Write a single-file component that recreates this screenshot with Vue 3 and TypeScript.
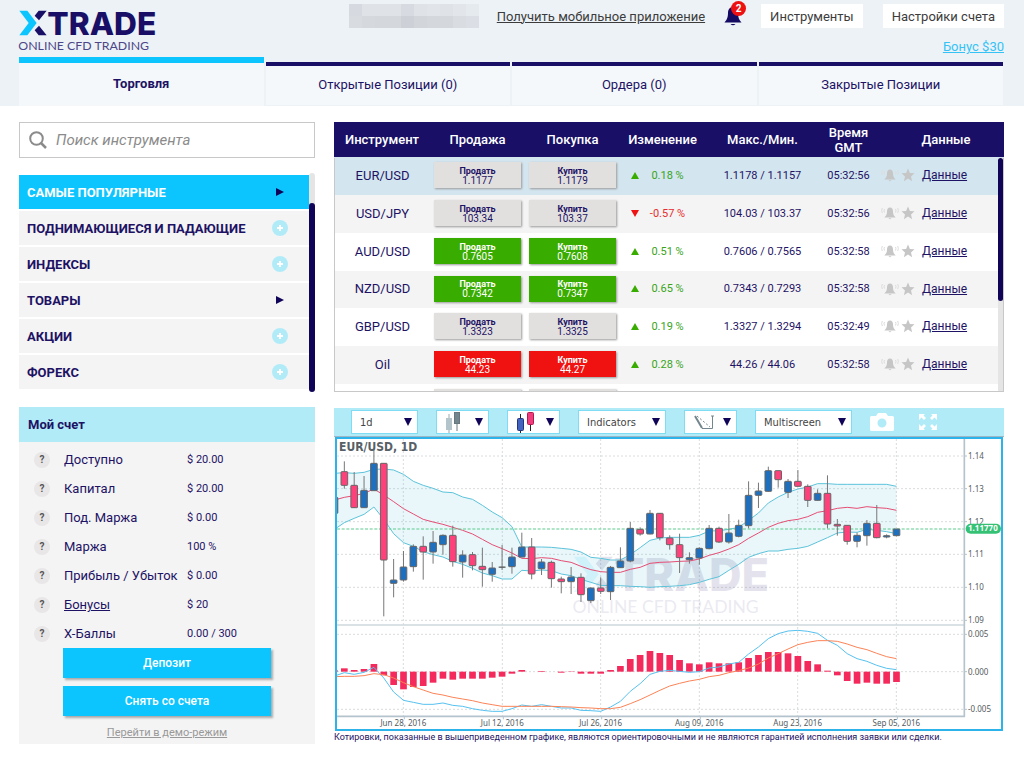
<script setup lang="ts">
import { ref } from 'vue'

type Tone = 'idle' | 'up' | 'down'
interface Quote {
  name: string
  sell: string
  buy: string
  tone: Tone
  change: string
  range: string
  time: string
}

const tabs = ['Торговля', 'Открытые Позиции (0)', 'Ордера (0)', 'Закрытые Позиции']
const activeTab = ref(0)

const maskTiles = [
  '#d6dae0', '#dfe3e8', '#dfe3e8', '#dfe3e8', '#d7dbe1', '#dfe3e8', '#e1e5ea', '#dfe3e8', '#e2e6ea', '#e5eaef',
  '#d8dce1', '#d5d9de', '#d4d8dd', '#d4d8dd', '#cdd0d6', '#d2d5da', '#d4d8dd', '#d4d8dd', '#d9dde2', '#dbdfe5',
]

const search = ref('')
const categories = [
  { name: 'САМЫЕ ПОПУЛЯРНЫЕ', group: false },
  { name: 'ПОДНИМАЮЩИЕСЯ И ПАДАЮЩИЕ', group: true },
  { name: 'ИНДЕКСЫ', group: true },
  { name: 'ТОВАРЫ', group: false },
  { name: 'АКЦИИ', group: true },
  { name: 'ФОРЕКС', group: true },
]
const activeCategory = ref(0)

const account = [
  { label: 'Доступно', value: '$ 20.00' },
  { label: 'Капитал', value: '$ 20.00' },
  { label: 'Под. Маржа', value: '$ 0.00' },
  { label: 'Маржа', value: '100 %' },
  { label: 'Прибыль / Убыток', value: '$ 0.00' },
  { label: 'Бонусы', value: '$ 20', link: true },
  { label: 'Х-Баллы', value: '0.00 / 300' },
]

const quotes: Quote[] = [
  { name: 'EUR/USD', sell: '1.1177', buy: '1.1179', tone: 'idle', change: '0.18 %', range: '1.1178 / 1.1157', time: '05:32:56' },
  { name: 'USD/JPY', sell: '103.34', buy: '103.37', tone: 'idle', change: '-0.57 %', range: '104.03 / 103.37', time: '05:32:56' },
  { name: 'AUD/USD', sell: '0.7605', buy: '0.7608', tone: 'up', change: '0.51 %', range: '0.7606 / 0.7565', time: '05:32:58' },
  { name: 'NZD/USD', sell: '0.7342', buy: '0.7347', tone: 'up', change: '0.65 %', range: '0.7343 / 0.7293', time: '05:32:58' },
  { name: 'GBP/USD', sell: '1.3323', buy: '1.3325', tone: 'idle', change: '0.19 %', range: '1.3327 / 1.3294', time: '05:32:49' },
  { name: 'Oil', sell: '44.23', buy: '44.27', tone: 'down', change: '0.28 %', range: '44.26 / 44.06', time: '05:32:58' },
]
const isFall = (q: Quote) => q.change.startsWith('-')

/* Chart drawing units: three per CSS pixel. */
const STEP = 29.58
const px = (i: number) => 43 + i * STEP

/* high, body top, body bottom, low, rising */
const candles: [number, number, number, number, 0 | 1][] = [
  [172, 172, 220, 220, 1],
  [64, 95, 136, 146, 0], [96, 136, 203, 204, 0], [108, 151, 203, 204, 1], [28, 70, 152, 152, 1],
  [70, 70, 360, 529, 0], [357, 420, 430, 472, 1], [333, 381, 420, 425, 1], [313, 319, 380, 395, 1],
  [289, 319, 336, 419, 0], [273, 307, 336, 371, 1], [283, 286, 314, 344, 1], [257, 286, 365, 380, 0],
  [331, 345, 366, 413, 1], [336, 344, 377, 391, 0], [323, 379, 389, 440, 0], [366, 384, 403, 425, 1],
  [315, 381, 382, 390, 1], [323, 351, 380, 401, 1], [278, 321, 351, 352, 1], [294, 321, 402, 418, 0],
  [357, 366, 386, 405, 1], [362, 367, 416, 443, 0], [410, 417, 425, 460, 0], [381, 411, 425, 462, 1],
  [400, 412, 464, 486, 0], [442, 444, 482, 489, 1], [412, 444, 454, 462, 0], [378, 382, 455, 480, 1],
  [322, 363, 383, 384, 1], [246, 265, 363, 367, 1], [262, 268, 282, 287, 0], [210, 220, 282, 283, 1],
  [220, 220, 293, 301, 0], [286, 294, 314, 329, 0], [281, 314, 353, 399, 0], [337, 353, 359, 371, 1],
  [322, 325, 354, 374, 1], [255, 265, 326, 328, 1], [260, 265, 306, 309, 0], [222, 279, 306, 311, 1],
  [239, 256, 289, 292, 1], [124, 166, 257, 265, 1], [128, 153, 166, 204, 1], [80, 92, 154, 155, 1],
  [92, 92, 119, 143, 0], [117, 124, 157, 174, 1], [90, 124, 139, 140, 0], [133, 139, 181, 201, 0],
  [148, 160, 181, 182, 1], [106, 160, 252, 265, 0], [237, 253, 258, 287, 0], [256, 256, 304, 314, 0],
  [278, 286, 304, 322, 1], [240, 250, 287, 317, 1], [195, 250, 293, 295, 0], [283, 287, 291, 295, 1],
  [267, 267, 287, 289, 1],
]
const upper = [
  100, 98, 100, 97, 88, 87, 90, 103, 124, 136, 145, 156, 158, 171, 178, 196, 216, 233, 260, 321, 321, 321, 322, 325,
  328, 336, 352, 355, 360, 360, 344, 323, 301, 294, 292, 292, 292, 286, 273, 272, 268, 262, 241, 219, 189, 171, 157,
  147, 141, 131, 131, 133, 133, 133, 133, 133, 133, 139,
]
const middle = [
  180, 172, 167, 160, 147, 165, 185, 206, 222, 238, 246, 253, 262, 271, 282, 298, 314, 326, 339, 355, 356, 353, 355,
  362, 367, 379, 389, 395, 397, 397, 388, 382, 370, 367, 366, 364, 363, 357, 346, 338, 327, 314, 295, 279, 262, 250,
  242, 238, 230, 217, 212, 205, 202, 205, 200, 203, 205, 211,
]
const lower = [
  268, 248, 235, 223, 201, 238, 281, 308, 319, 335, 344, 351, 364, 373, 385, 399, 407, 417, 417, 391, 393, 390, 392,
  402, 407, 418, 427, 436, 437, 437, 439, 440, 442, 440, 439, 437, 434, 427, 418, 410, 391, 373, 352, 341, 333, 333,
  328, 325, 319, 306, 293, 279, 276, 277, 268, 271, 275, 281,
]
const histogram = [
  4, 10, 5, 8, 23, -11, -40, -53, -46, -43, -33, -21, -24, -21, -21, -21, -18, -15, -6, 5, 0, 2, 0, -3, -1, -6, -6,
  -6, 5, 17, 38, 50, 62, 56, 50, 35, 25, 22, 28, 25, 25, 28, 41, 50, 59, 59, 55, 47, 32, 22, 3, -11, -28, -36, -33,
  -36, -36, -31,
]
const macd = [
  708, 698, 703, 697, 682, 714, 756, 781, 787, 793, 793, 789, 796, 799, 806, 811, 814, 814, 806, 795, 799, 794, 799,
  804, 804, 811, 812, 814, 801, 784, 754, 731, 703, 694, 691, 694, 697, 695, 684, 681, 672, 667, 642, 621, 596, 581,
  573, 571, 574, 580, 601, 616, 641, 656, 664, 676, 685, 689,
]
const signal = [
  710, 709, 709, 707, 701, 704, 714, 728, 740, 750, 760, 765, 772, 777, 782, 789, 794, 799, 799, 799, 799, 799, 799,
  800, 801, 803, 804, 806, 806, 802, 791, 779, 765, 751, 738, 730, 723, 718, 710, 706, 698, 692, 684, 672, 654, 641,
  627, 614, 607, 602, 602, 604, 612, 622, 629, 640, 650, 656,
]
const toPoints = (ys: number[]) => ys.map((y, k) => `${px(k - 1).toFixed(1)},${y}`)
const line = (ys: number[]) => toPoints(ys).join(' ')
const band = [...toPoints(upper), ...toPoints(lower).reverse()].join(' ')

const priceMarks = [
  { y: 48, text: '1.14' }, { y: 146, text: '1.13' }, { y: 245, text: '1.12' }, { y: 343, text: '1.11' },
  { y: 442, text: '1.10' }, { y: 541, text: '1.09' }, { y: 583, text: '0.005' }, { y: 695, text: '0.000' },
  { y: 808, text: '-0.005' },
]
const dateMarks = [
  { x: 220, text: 'Jun 28, 2016' }, { x: 517, text: 'Jul 12, 2016' }, { x: 812, text: 'Jul 26, 2016' },
  { x: 1108, text: 'Aug 09, 2016' }, { x: 1403, text: 'Aug 23, 2016' }, { x: 1699, text: 'Sep 05, 2016' },
]
</script>

<template>
  <div class="page">
    <header class="header">
      <div class="top">
        <svg class="logo" viewBox="54 27 414 129" role="img" aria-label="XTRADE">
          <symbol id="brand" viewBox="54 27 414 129">
            <path d="M58 32H82L110 69L82 106H58L86 69Z" fill="#0cc5ff" />
            <path d="M116 32H140L117 61L104 47ZM117 77L140 106H116L104 91Z" fill="#190f66" />
            <text x="142" y="105" font-family="Inter, sans-serif" font-weight="800" font-size="95" fill="#190f66">TRADE</text>
            <text x="55" y="150" font-family="Lato, sans-serif" font-size="37" fill="#4c4689">ONLINE CFD TRADING</text>
          </symbol>
          <use href="#brand" x="54" y="27" width="414" height="129" />
        </svg>
        <div class="tools">
          <div class="tools-row">
            <div class="mask" aria-hidden="true">
              <span v-for="(c, i) in maskTiles" :key="i" :style="{ background: c }"></span>
            </div>
            <a class="mobile" href="#">Получить мобильное приложение</a>
            <button class="bell" type="button" aria-label="Уведомления">
              <svg viewBox="0 0 18 20" width="18" height="20">
                <path d="M9 1C5.500 1 4 4 4 7C4 12 2.500 14 .5 16.500H17.500C15.500 14 14 12 14 7C14 4 12.500 1 9 1Z" fill="#160b63" />
                <path d="M6.500 18H11.500Q9 20.500 6.500 18Z" fill="#160b63" />
              </svg>
              <span class="badge">2</span>
            </button>
            <button class="plain" type="button">Инструменты</button>
            <button class="plain settings" type="button">Настройки счета</button>
          </div>
          <a class="bonus" href="#">Бонус $30</a>
        </div>
      </div>
      <nav class="tabs">
        <button
          v-for="(t, i) in tabs"
          :key="t"
          type="button"
          class="tab"
          :class="{ active: i === activeTab }"
          @click="activeTab = i"
        >{{ t }}</button>
      </nav>
    </header>

    <main class="content">
      <aside class="side">
        <label class="search">
          <svg viewBox="0 0 18 18" width="18" height="18" fill="none" stroke="#8b8b8b">
            <circle cx="7.500" cy="7.500" r="6.300" stroke-width="2" />
            <path d="M12 12L17 17" stroke-width="2.500" />
          </svg>
          <input v-model="search" type="text" placeholder="Поиск инструмента" aria-label="Поиск инструмента" />
        </label>

        <div class="menu">
          <div class="menu-list">
            <button
              v-for="(c, i) in categories"
              :key="c.name"
              type="button"
              class="category"
              :class="{ active: i === activeCategory }"
              @click="activeCategory = i"
            >
              <span>{{ c.name }}</span>
              <svg v-if="c.group" viewBox="0 0 16 16" width="16" height="16">
                <circle cx="8" cy="8" r="8" fill="#b2ebf8" />
                <path d="M8 5V11M5 8H11" stroke="#fff" stroke-width="2" />
              </svg>
              <svg v-else viewBox="0 0 16 16" width="16" height="16">
                <path d="M4 4L12 8L4 12Z" fill="#100458" />
              </svg>
            </button>
          </div>
          <div class="menu-scroll"><div class="menu-thumb"></div></div>
        </div>

        <section class="account">
          <h2>Мой счет</h2>
          <dl>
            <div v-for="a in account" :key="a.label" class="account-row">
              <button type="button" class="help" :aria-label="'Справка: ' + a.label">?</button>
              <dt><a v-if="a.link" href="#">{{ a.label }}</a><template v-else>{{ a.label }}</template></dt>
              <dd>{{ a.value }}</dd>
            </div>
          </dl>
          <div class="actions">
            <button type="button">Депозит</button>
            <button type="button">Снять со счета</button>
            <a href="#">Перейти в демо-режим</a>
          </div>
        </section>
      </aside>

      <section class="main">
        <div class="quotes">
          <table>
            <colgroup>
              <col class="c-name" /><col class="c-deal" /><col class="c-deal" /><col class="c-change" />
              <col class="c-range" /><col class="c-time" /><col class="c-icons" /><col class="c-data" />
            </colgroup>
            <thead>
              <tr>
                <th>Инструмент</th><th>Продажа</th><th>Покупка</th><th>Изменение</th>
                <th>Макс./Мин.</th><th>Время GMT</th><td></td><th class="h-data">Данные</th>
              </tr>
            </thead>
            <tbody>
              <tr v-for="(q, i) in quotes" :key="q.name" :class="{ selected: i === 0 }">
                <td class="name">{{ q.name }}</td>
                <td><button type="button" class="deal" :class="q.tone"><b>Продать</b><span>{{ q.sell }}</span></button></td>
                <td><button type="button" class="deal" :class="q.tone"><b>Купить</b><span>{{ q.buy }}</span></button></td>
                <td>
                  <div class="change" :class="{ fall: isFall(q) }">
                    <svg viewBox="0 0 8 7" width="8" height="7">
                      <path :d="isFall(q) ? 'M0 0H8L4 7Z' : 'M0 7H8L4 0Z'" />
                    </svg>
                    <span>{{ q.change }}</span>
                  </div>
                </td>
                <td>{{ q.range }}</td>
                <td>{{ q.time }}</td>
                <td>
                  <div class="marks">
                    <button type="button" aria-label="Оповещение">
                      <svg viewBox="0 0 18 14" width="18" height="14">
                        <path d="M9 1.500C6.800 1.500 6 3.500 6 5.500C6 8.500 5 9.500 3.300 11.500H14.700C13 9.500 12 8.500 12 5.500C12 3.500 11.200 1.500 9 1.500ZM7.500 12.300H10.500Q9 14 7.500 12.300Z" fill="#c6c6c6" />
                        <path d="M3.500 3Q2.500 4.500 3.500 6.500M14.500 3Q15.500 4.500 14.500 6.500M1.300 2Q0 4.500 1.300 7M16.700 2Q18 4.500 16.700 7" fill="none" stroke="#dcdcdc" stroke-width="1" />
                      </svg>
                    </button>
                    <button type="button" aria-label="Избранное">
                      <svg viewBox="0 0 14 14" width="14" height="14">
                        <path d="M7 .5L8.900 5L13.500 5.300L10 8.400L11.100 13.200L7 10.600L2.900 13.200L4 8.400L.5 5.300L5.100 5Z" fill="#c6c6c6" />
                      </svg>
                    </button>
                  </div>
                </td>
                <td class="data"><a href="#">Данные</a></td>
              </tr>
              <tr aria-hidden="true">
                <td></td><td><div class="deal idle"></div></td><td><div class="deal idle"></div></td>
                <td colspan="5"></td>
              </tr>
            </tbody>
          </table>
          <div class="quotes-scroll"><div class="quotes-thumb"></div></div>
        </div>

        <div class="toolbar">
          <label class="box period">
            <select aria-label="Период"><option>1d</option></select>
            <svg viewBox="0 0 8 8" width="8" height="8"><path d="M0 0H8L4 8Z" fill="#100458" /></svg>
          </label>
          <button type="button" class="box" aria-label="Тип графика">
            <svg viewBox="0 0 16 22" width="16" height="22">
              <path d="M4 3V22" stroke="#9aa9af" /><rect x="1" y="7" width="6" height="12" fill="#b4c4cb" />
              <path d="M12 8V20" stroke="#6b7a80" /><rect x="9.500" y="1.500" width="5" height="11" fill="#74868d" stroke="#66777e" />
            </svg>
            <svg viewBox="0 0 8 8" width="8" height="8"><path d="M0 0H8L4 8Z" fill="#100458" /></svg>
          </button>
          <button type="button" class="box" aria-label="Цвет свечей">
            <svg viewBox="0 0 18 22" width="18" height="22">
              <path d="M4.500 3V22" stroke="#222" /><rect x="1.500" y="7.500" width="6" height="12" rx="1" fill="#4263c0" stroke="#24357c" />
              <path d="M14.500 12V20" stroke="#222" /><rect x="11.500" y="1.500" width="6" height="12" rx="1" fill="#f03c7c" stroke="#b01c52" />
            </svg>
            <svg viewBox="0 0 8 8" width="8" height="8"><path d="M0 0H8L4 8Z" fill="#100458" /></svg>
          </button>
          <label class="box indicators">
            <select aria-label="Индикаторы"><option>Indicators</option></select>
            <svg viewBox="0 0 8 8" width="8" height="8"><path d="M0 0H8L4 8Z" fill="#100458" /></svg>
          </label>
          <button type="button" class="box" aria-label="Рисование">
            <svg viewBox="0 0 22 18" width="22" height="18" fill="none" stroke="#74868d">
              <path d="M2 3L9 15" stroke-width="2" />
              <path d="M4 3L17 14" stroke-dasharray="2 2" />
              <path d="M9 15.500H19.500V3M18 3H21" />
            </svg>
            <svg viewBox="0 0 8 8" width="8" height="8"><path d="M0 0H8L4 8Z" fill="#100458" /></svg>
          </button>
          <label class="box multi">
            <select aria-label="Экраны"><option>Multiscreen</option></select>
            <svg viewBox="0 0 8 8" width="8" height="8"><path d="M0 0H8L4 8Z" fill="#100458" /></svg>
          </label>
          <button type="button" class="icon" aria-label="Снимок">
            <svg viewBox="0 0 24 18" width="24" height="18">
              <path fill-rule="evenodd" d="M1.500 3H6L8 0H16L18 3H22.500Q24 3 24 4.500V16.500Q24 18 22.500 18H1.500Q0 18 0 16.500V4.500Q0 3 1.500 3ZM12 5.500A4.500 4.500 0 1 0 12 14.500A4.500 4.500 0 1 0 12 5.500Z" fill="#fff" />
            </svg>
          </button>
          <button type="button" class="icon" aria-label="Полный экран">
            <svg viewBox="0 0 18 18" width="18" height="18" fill="#fff">
              <path d="M0 1H6L4.500 2.500L7 5L5 7L2.500 4.500L0 7ZM18 1H12L13.500 2.500L11 5L13 7L15.500 4.500L18 7ZM0 17H6L4.500 15.500L7 13L5 11L2.500 13.500L0 11ZM18 17H12L13.500 15.500L11 13L13 11L15.500 13.500L18 11Z" />
            </svg>
          </button>
        </div>

        <div class="chart">
          <svg viewBox="21 -3 1992 870">
            <g class="grid">
              <line v-for="m in priceMarks" :key="m.text" x1="21" x2="1903" :y1="m.y" :y2="m.y" />
              <line v-for="m in dateMarks" :key="m.text" :x1="m.x" :x2="m.x" y1="-3" y2="829" />
            </g>
            <polygon :points="band" fill="#33b5d0" fill-opacity=".11" />
            <use href="#brand" x="726" y="343" width="590" height="184" opacity=".11" />
            <polyline class="series" :points="line(upper)" stroke="#5cc3da" />
            <polyline class="series" :points="line(lower)" stroke="#5cc3da" />
            <polyline class="series" :points="line(middle)" stroke="#e64d74" />
            <line class="last" x1="21" x2="1903" y1="267" y2="267" />
            <g v-for="(c, k) in candles" :key="k" class="candle">
              <line :x1="px(k - 1)" :x2="px(k - 1)" :y1="c[0]" :y2="c[3]" />
              <rect :x="px(k - 1) - 10" :y="c[1]" width="20" :height="c[2] - c[1]" rx="2" :fill="c[4] ? '#1e6fbe' : '#ff417b'" />
            </g>
            <rect
              v-for="(h, k) in histogram"
              :key="'h' + k"
              :x="px(k - 1) - 10"
              :y="h > 0 ? 695 - h : 695"
              width="20"
              :height="Math.abs(h)"
              fill="#f32a5b"
            />
            <polyline class="series" :points="line(macd)" stroke="#56c1ef" />
            <polyline class="series" :points="line(signal)" stroke="#fb8357" />
            <path d="M21 555H1903" stroke="#cfd8dd" stroke-width="5" />
            <path d="M21 829H1903V-3" stroke="#b5c3cd" stroke-width="5" fill="none" />
            <path v-for="m in priceMarks" :key="'t' + m.text" :d="`M1903 ${m.y}h8`" stroke="#b5c3cd" stroke-width="3" />
            <path v-for="m in dateMarks" :key="'d' + m.text" :d="`M${m.x + 3} 829v9`" stroke="#b5c3cd" stroke-width="3" />
            <g class="labels">
              <text v-for="m in priceMarks" :key="m.text" x="1914" :y="m.y + 9">{{ m.text }}</text>
              <text v-for="m in dateMarks" :key="m.text" :x="m.x" y="857" text-anchor="middle">{{ m.text }}</text>
            </g>
            <rect x="1907" y="251" width="106" height="30" rx="15" fill="#36c275" />
            <text class="last-text" x="1914" y="274">1.11770</text>
            <text class="title" x="27" y="32">EUR/USD, 1D</text>
          </svg>
        </div>
        <p class="note">Котировки, показанные в вышеприведенном графике, являются ориентировочными и не являются гарантией исполнения заявки или сделки.</p>
      </section>
    </main>
  </div>
</template>

<style>
body {
  margin: 0;
  background: #fff;
}
</style>

<style scoped>
.page {
  font-family: Roboto, "Noto Sans", sans-serif;
  font-size: 13px;
  color: #1d1264;
}
button,
input,
select {
  font: inherit;
  color: inherit;
  border: 0;
  margin: 0;
  padding: 0;
  background: none;
}
a {
  color: inherit;
}
svg {
  display: block;
  flex: none;
}

.header {
  background: #ecf2f6;
  padding: 0 20px 0 19px;
}
.top {
  display: flex;
  justify-content: space-between;
  height: 58px;
}
.logo {
  width: 138px;
  height: 43px;
  margin: 9px 0 0 -1px;
}
.tools {
  display: flex;
  flex-direction: column;
  align-items: flex-end;
  padding-top: 4px;
  color: #3c3c3c;
}
.tools-row {
  display: flex;
  align-items: center;
}
.mask {
  display: grid;
  grid-template-columns: repeat(10, 13px);
  grid-auto-rows: 12px;
  margin-right: 18px;
}
.bell {
  position: relative;
  margin: 0 19px;
}
.badge {
  position: absolute;
  top: -5px;
  left: 7px;
  width: 15px;
  height: 15px;
  border-radius: 50%;
  background: #ee1111;
  color: #fff;
  font-size: 10px;
  font-weight: 700;
  line-height: 15px;
  text-align: center;
}
.plain {
  height: 24px;
  padding: 0 9px;
  background: #fff;
}
.settings {
  margin-left: 20px;
}
.bonus {
  margin-top: 11px;
  line-height: 15px;
  color: #35c3f6;
}
.tabs {
  display: flex;
  align-items: flex-end;
  gap: 2px;
  margin-right: 1px;
}
.tab {
  flex: 1;
  height: 43px;
  margin-bottom: 1px;
  padding-bottom: 2px;
  border-top: 4px solid #190f66;
  background: #f4f8fb;
}
.tab.active {
  height: 49px;
  margin: -1px 0 0;
  padding-bottom: 3px;
  border-top: 6px solid #0cc5ff;
  font-weight: 700;
}

.content {
  display: grid;
  grid-template-columns: minmax(0, 296fr) minmax(0, 670fr);
  gap: 19px;
  padding: 16px 20px 16px 19px;
}

.search {
  display: flex;
  align-items: center;
  gap: 9px;
  height: 34px;
  padding: 0 9px;
  border: 1px solid #c8c8c8;
}
.search input {
  flex: 1;
  min-width: 0;
  height: 30px;
  font-size: 15px;
  font-style: italic;
  outline: 0;
}
.search input::placeholder {
  color: #8b8b8b;
  opacity: 1;
}

.menu {
  display: flex;
  margin: 15px 0;
}
.menu-list {
  flex: 1;
  display: flex;
  flex-direction: column;
  gap: 2px;
  padding: 2px 0 3px;
}
.category {
  display: flex;
  align-items: center;
  justify-content: space-between;
  height: 34px;
  padding: 0 21px 0 8px;
  background: #f4f4f4;
  font-weight: 700;
}
.category.active {
  background: #0cc5ff;
  color: #fff;
}
.menu-scroll {
  width: 6px;
  border-radius: 3px;
  background: #e5e5e5;
}
.menu-thumb {
  height: 189px;
  margin-top: 30px;
  border-radius: 3px;
  background: #100458;
}

.account {
  background: #f4f4f4;
}
.account h2 {
  margin: 0;
  padding: 0 9px;
  background: #b2ebf8;
  font-size: 13px;
  line-height: 35px;
}
.account dl {
  margin: 0;
  padding: 3px 15px 0;
}
.account-row {
  display: grid;
  grid-template-columns: 30px 123px 1fr;
  align-items: center;
  height: 29px;
}
.help {
  width: 16px;
  height: 16px;
  border-radius: 50%;
  background: #e8e6e6;
  color: #555;
  font-size: 10px;
  font-weight: 700;
  line-height: 16px;
  text-align: center;
}
.account dt {
  white-space: nowrap;
}
.account dd {
  margin: 0;
  font-size: 11px;
}
.actions {
  display: flex;
  flex-direction: column;
  gap: 8px;
  padding: 0 44px 3px;
  text-align: center;
}
.actions button {
  height: 30px;
  background: #0cc5ff;
  box-shadow: 2px 2px 2px #aaa;
  color: #fff;
  font-size: 12px;
  font-weight: 500;
}
.actions a {
  color: #999;
  font-size: 11px;
  line-height: 17px;
}

.quotes {
  position: relative;
  height: 270px;
  overflow: hidden;
}
.quotes::after {
  content: "";
  position: absolute;
  inset: 36px 0 0;
  border: 1px solid #c8c8c8;
  border-top: 0;
  pointer-events: none;
}
.quotes table {
  width: 100%;
  table-layout: fixed;
  border-collapse: collapse;
  text-align: center;
  font-size: 11px;
}
.c-name { width: 96px; }
.c-deal { width: 95px; }
.c-change { width: 85px; }
.c-range { width: 115px; }
.c-time { width: 57px; }
.c-icons { width: 40px; }
.c-data { width: 87px; }
.quotes th,
.quotes td {
  padding: 0;
}
.quotes thead tr {
  height: 35px;
  background: #190f66;
  color: #fff;
}
.quotes th {
  font-size: 13px;
  font-weight: 500;
  line-height: 15px;
}
.quotes .h-data {
  padding-right: 29px;
}
.quotes tbody td {
  padding-bottom: 2px;
}
.quotes tbody tr {
  height: 38px;
}
.quotes tbody tr:nth-child(4n) {
  height: 37px;
}
.quotes tbody tr:nth-child(even) {
  background: #f4f4f4;
}
.quotes tbody tr.selected {
  background: #d3e5ef;
}
.quotes .name {
  padding-left: 1px;
  font-size: 13px;
}
.deal {
  display: flex;
  flex-direction: column;
  justify-content: center;
  box-sizing: border-box;
  width: 87px;
  height: 26px;
  margin: 0 auto;
  padding-top: 1px;
  box-shadow: 1px 1px 2px #999;
  font-size: 10px;
  line-height: 10px;
  text-align: center;
}
.deal b {
  font-size: 9px;
}
.deal.idle { background: #e1e0df; }
.deal.up { background: #39ac00; color: #fff; }
.deal.down { background: #f01111; color: #fff; }
.change {
  display: flex;
  align-items: center;
  padding-left: 11px;
  color: #39a418;
  fill: #39ac00;
}
.change span {
  flex: 1;
  padding-right: 9px;
}
.change.fall {
  color: #e82c2c;
  fill: #f01111;
}
.marks {
  display: flex;
  align-items: center;
  gap: 2px;
  padding-left: 4px;
}
.quotes .data {
  padding-left: 5px;
  font-size: 12px;
  text-align: left;
}
.quotes-scroll {
  position: absolute;
  top: 36px;
  right: 1px;
  bottom: 1px;
  width: 5px;
  background: #e5e5e5;
}
.quotes-thumb {
  height: 143px;
  border-radius: 3px;
  background: #100458;
}

.toolbar {
  display: flex;
  align-items: center;
  height: 28px;
  margin-top: 16px;
  padding: 0 17px;
  border-bottom: 1px solid #9db8c4;
  background: #b2ebf8;
  color: #444;
  font-family: "DejaVu Sans Condensed", "Noto Sans", sans-serif;
  font-size: 11px;
}
.box {
  display: flex;
  align-items: center;
  justify-content: space-between;
  box-sizing: border-box;
  width: 53px;
  height: 24px;
  margin-right: 18px;
  padding: 0 5px 0 8px;
  border: 1px solid #7fdcf2;
  background: #fff;
}
.box select {
  flex: 1;
  min-width: 0;
  appearance: none;
  outline: 0;
}
.period { width: 67px; }
.indicators { width: 88px; }
.multi { width: 97px; }
.icon + .icon { margin-left: 25px; }

.chart {
  margin: 0 1px;
  border: 2px solid #2bb3ea;
}
.chart svg {
  width: 100%;
  height: auto;
}
.grid line {
  stroke: #d9dcde;
  stroke-width: 3;
  stroke-dasharray: 6 6;
}
.series {
  fill: none;
  stroke-width: 3;
}
.last {
  stroke: #5ccb8e;
  stroke-width: 3;
  stroke-dasharray: 9 5;
}
.candle line {
  stroke: #777;
  stroke-width: 3;
}
.candle rect {
  stroke: #666;
  stroke-width: 3;
}
.labels {
  fill: #555c61;
  font-family: "Noto Sans", sans-serif;
  font-size: 24px;
}
.last-text {
  fill: #fff;
  font-family: "Noto Sans", sans-serif;
  font-size: 24px;
  font-weight: 700;
}
.title {
  fill: #566066;
  font-family: "DejaVu Sans Condensed", "DejaVu Sans", sans-serif;
  font-size: 36px;
  font-weight: 700;
}
.note {
  margin: 0;
  font-size: 9px;
  line-height: 12px;
}
</style>
